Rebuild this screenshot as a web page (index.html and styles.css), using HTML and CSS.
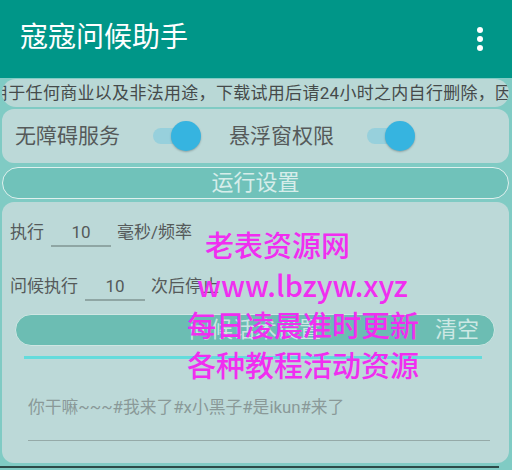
FILE: index.html
```html
<!DOCTYPE html>
<html lang="zh">
<head>
<meta charset="utf-8">
<link rel="stylesheet" href="styles.css">
</head>
<body>
<div class="screen">
  <header class="toolbar">
    <h1 class="title">寇寇问候助手</h1>
    <svg class="menu" width="8" height="26" viewBox="0 0 8 26"><circle cx="4" cy="4" r="3" fill="#fff"/><circle cx="4" cy="13" r="3" fill="#fff"/><circle cx="4" cy="22" r="3" fill="#fff"/></svg>
  </header>
  <main class="content">
    <div class="marquee"><span class="marquee-text">用于任何商业以及非法用途，下载试用后请24小时之内自行删除，因</span></div>
    <section class="card switches">
      <div class="switch-item">
        <span class="label">无障碍服务</span>
        <span class="switch"><span class="track"></span><span class="thumb"></span></span>
      </div>
      <div class="switch-item">
        <span class="label">悬浮窗权限</span>
        <span class="switch"><span class="track"></span><span class="thumb"></span></span>
      </div>
    </section>
    <div class="run-btn">运行设置</div>
    <section class="card form">
      <div class="row row1">
        <span class="flabel">执行</span>
        <span class="input">10</span>
        <span class="flabel">毫秒/频率</span>
      </div>
      <div class="row row2">
        <span class="flabel">问候执行</span>
        <span class="input">10</span>
        <span class="flabel">次后停止</span>
      </div>
      <div class="greet-btn">
        <span class="greet-title">问候话术设置</span>
        <span class="clear">清空</span>
      </div>
      <div class="cyan-line"></div>
      <div class="textarea">你干嘛~~~#我来了#x小黑子#是ikun#来了</div>
    </section>
    <div class="bottom-shadow"></div>
  </main>
  <div class="watermark">
    <div class="wm wm1">老表资源网</div>
    <div class="wm wm2">www.lbzyw.xyz</div>
    <div class="wm wm3">每日凌晨准时更新</div>
    <div class="wm wm4">各种教程活动资源</div>
  </div>
</div>
</body>
</html>
```
FILE: styles.css
```css
* { box-sizing: border-box; margin: 0; padding: 0; }
html, body { width: 512px; height: 470px; overflow: hidden; }
body {
  background: #80cbc4;
  font-family: Roboto, "Noto Sans CJK SC", "Noto Sans", sans-serif;
}
.screen { position: relative; width: 512px; height: 470px; }

.toolbar {
  height: 78px;
  background: #009688;
  display: flex;
  align-items: center;
  justify-content: space-between;
  padding: 0 28px 0 20px;
}
.title {
  color: #fff;
  font-size: 28px;
  font-weight: 400;
  line-height: 1;
  margin-top: -2px;
}
.menu { display: block; }

.content { padding: 1px 3px 0 2px; display: flex; flex-direction: column; }

.marquee {
  height: 28px;
  background: #b9d8d6;
  border-radius: 14px;
  overflow: hidden;
  white-space: nowrap;
  display: flex;
  align-items: center;
}
.marquee-text {
  font-size: 17px;
  color: #454a4a;
  margin-left: -11px;
  line-height: 1;
  letter-spacing: 0.3px;
}

.card {
  background: #bcd9d8;
  border-radius: 12px;
}
.switches {
  margin-top: 2px;
  height: 54px;
  display: flex;
  align-items: center;
  padding-left: 13px;
}
.switch-item { display: flex; align-items: center; width: 214px; }
.label { font-size: 21px; color: #555a5a; line-height: 1; width: 138px; }
.switch { position: relative; width: 48px; height: 30px; display: block; }
.track {
  position: absolute; left: 0; top: 7px;
  width: 36px; height: 16px; border-radius: 8px;
  background: #97d0dc;
}
.thumb {
  position: absolute; left: 18px; top: 0;
  width: 30px; height: 30px; border-radius: 50%;
  background: #36b4e0;
  box-shadow: 0 1px 2px rgba(0,0,0,0.25);
}

.run-btn {
  margin-top: 4px;
  height: 32px;
  border: 1.5px solid #dff0ee;
  border-radius: 16px;
  background: #70c2ba;
  color: #d6edea;
  font-size: 22px;
  line-height: 30px;
  text-align: center;
}

.form {
  margin-top: 3px;
  height: 261px;
  padding: 0 14px 0 8px;
  display: flex;
  flex-direction: column;
}
.row { display: flex; align-items: center; height: 30px; }
.row1 { margin-top: 15px; }
.row2 { margin-top: 24px; }
.flabel { font-size: 17px; color: #555a5a; line-height: 1; }
.input {
  font-size: 17px; color: #555a5a;
  height: 30px; line-height: 30px;
  text-align: center;
  border-bottom: 2px solid #8fa6a4;
  width: 60px;
}
.row1 .input { margin-left: 7px; margin-right: 6px; }
.row2 .input { margin-left: 7px; margin-right: 6px; }

.greet-btn {
  margin-top: 13px;
  margin-left: 5px;
  height: 32px;
  border-radius: 16px;
  border: 1px solid #cfe6e3;
  background: #6cbdb3;
  position: relative;
  display: flex;
  align-items: center;
  justify-content: center;
}
.greet-title { font-size: 22px; color: #c9e6e2; line-height: 1; }
.clear {
  position: absolute; right: 15px; top: 4px;
  font-size: 22px; color: #cde8e4; line-height: 1;
}
.cyan-line {
  margin: 10px 13px 0 14px;
  height: 3px;
  background: #63dcdc;
}
.textarea {
  margin: 37px 5px 0 18px;
  padding-bottom: 22px;
  border-bottom: 1.5px solid #95aaa8;
  font-size: 16.8px;
  color: #8a9998;
  line-height: 22px;
}
.bottom-shadow {
  margin-top: 3px;
  margin-left: -2px;
  width: 499px;
  height: 2px;
  background: #2d4a48;
}

.watermark {
  position: absolute;
  left: 186px;
  top: 224px;
  color: #f02ef0;
  font-size: 29px;
  font-weight: 500;
  line-height: 40px;
  font-family: "Noto Sans CJK SC", "Noto Sans", sans-serif;
  white-space: nowrap;
}
.wm1 { padding-left: 19px; }
.wm2 { padding-left: 11px; }
.wm3, .wm4 { padding-left: 1px; }
```
